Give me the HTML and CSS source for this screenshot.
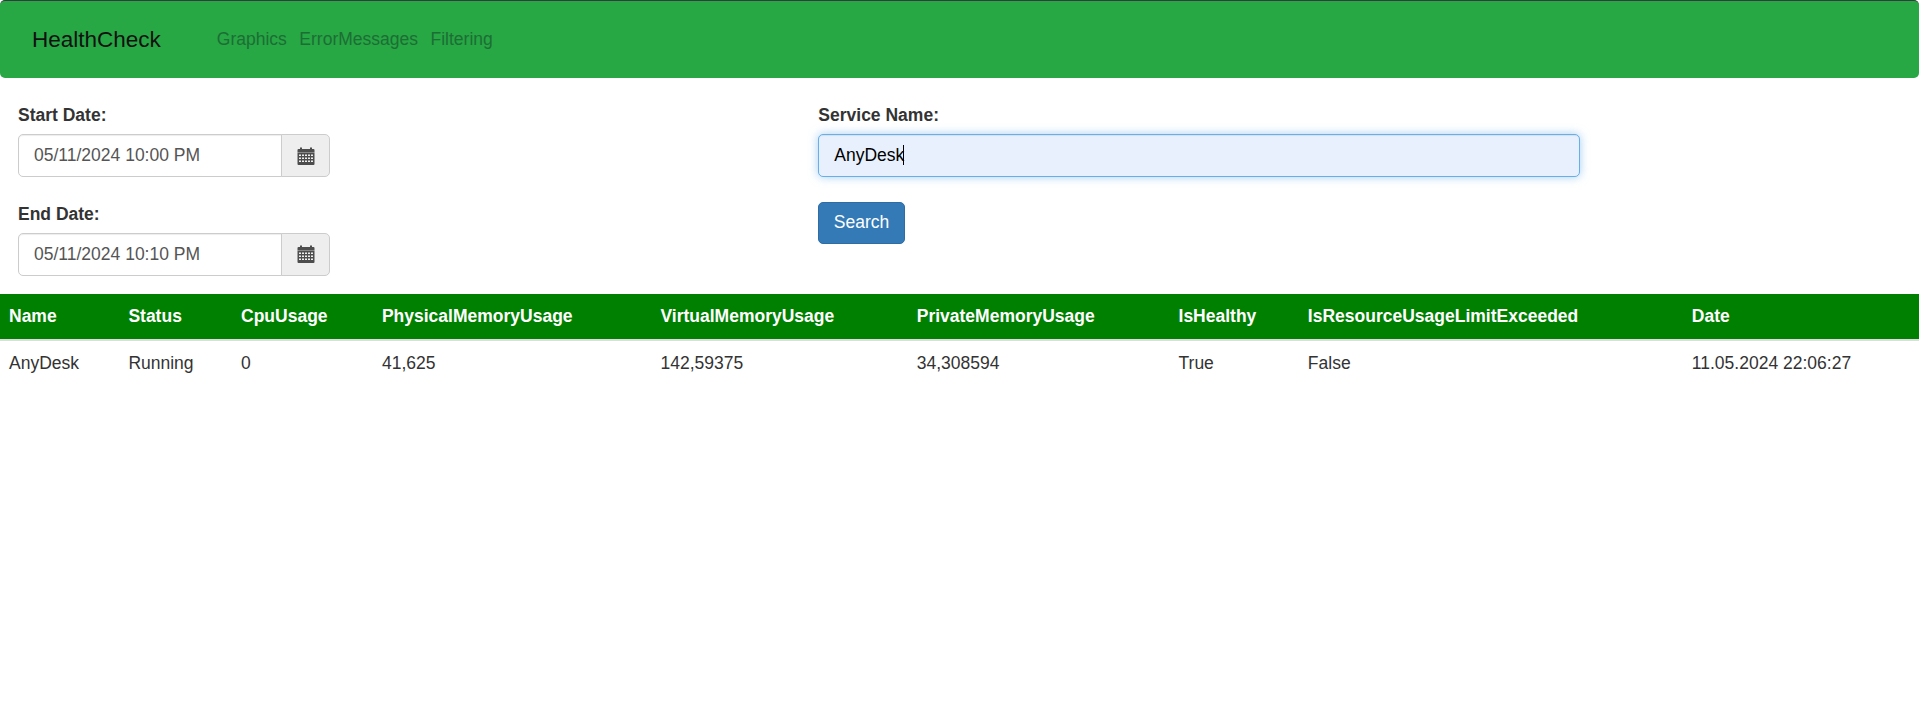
FILE: index.html
```html
<!DOCTYPE html>
<html lang="en">

<head>
    <meta charset="UTF-8" />
    <meta name="viewport" content="width=device-width, initial-scale=1.0" />
    <title>HealthCheck</title>

    <link rel="stylesheet" href="styles.css">
</head>

<body>
    <svg class="icon-defs" width="0" height="0" aria-hidden="true">
        <symbol id="calendar" viewBox="0 0 18 18">
            <path d="M3 0.5h2v1.5h8V0.5h2v1.5h1.5a1 1 0 0 1 1 1V5.5H0.5V3a1 1 0 0 1 1-1H3z" />
            <path fill-rule="evenodd" d="M0.5 5.8h17v11.2a1 1 0 0 1-1 1H1.5a1 1 0 0 1-1-1z
                M2 7.5v1.5h2V7.5z M5 7.5v1.5h2V7.5z M8 7.5v1.5h2V7.5z M11 7.5v1.5h2V7.5z M14 7.5v1.5h2V7.5z
                M2 10.5v1.5h2V10.5z M5 10.5v1.5h2V10.5z M8 10.5v1.5h2V10.5z M11 10.5v1.5h2V10.5z M14 10.5v1.5h2V10.5z
                M2 13.5v1.5h2V13.5z M5 13.5v1.5h2V13.5z M8 13.5v1.5h2V13.5z M11 13.5v1.5h2V13.5z M14 13.5v1.5h2V13.5z" />
        </symbol>
    </svg>

    <!-- NAVBAR -->
    <nav class="navbar">
        <a class="brand" href="#">HealthCheck</a>
        <ul class="nav-links">
            <li><a href="#">Graphics</a></li>
            <li><a href="#">ErrorMessages</a></li>
            <li><a href="#">Filtering</a></li>
        </ul>
    </nav>

    <!-- FILTER -->
    <form class="filter" action="">
        <div class="col">
            <div class="form-group">
                <label for="startDate">Start Date:</label>
                <div class="input-group">
                    <input class="form-control" type="text" id="startDate" value="05/11/2024 10:00 PM" />
                    <span class="addon"><svg class="icon"><use href="#calendar"></use></svg></span>
                </div>
            </div>

            <div class="form-group last">
                <label for="endDate">End Date:</label>
                <div class="input-group">
                    <input class="form-control" type="text" id="endDate" value="05/11/2024 10:10 PM" />
                    <span class="addon"><svg class="icon"><use href="#calendar"></use></svg></span>
                </div>
            </div>
        </div>

        <div class="col">
            <div class="form-group">
                <label for="serviceName">Service Name:</label>
                <div class="service-field">
                    <input class="form-control focused" type="text" id="serviceName" value="AnyDesk" />
                    <span class="caret"></span>
                </div>
            </div>

            <button class="btn-search" type="button">Search</button>
        </div>
    </form>

    <!-- RESULT -->
    <table class="result">
        <thead>
            <tr>
                <th>Name</th>
                <th>Status</th>
                <th>CpuUsage</th>
                <th>PhysicalMemoryUsage</th>
                <th>VirtualMemoryUsage</th>
                <th>PrivateMemoryUsage</th>
                <th>IsHealthy</th>
                <th>IsResourceUsageLimitExceeded</th>
                <th>Date</th>
            </tr>
        </thead>
        <tbody>
            <tr>
                <td>AnyDesk</td>
                <td>Running</td>
                <td>0</td>
                <td>41,625</td>
                <td>142,59375</td>
                <td>34,308594</td>
                <td>True</td>
                <td>False</td>
                <td>11.05.2024 22:06:27</td>
            </tr>
        </tbody>
    </table>
</body>

</html>
```

FILE: styles.css
```css
* {
    box-sizing: border-box;
}

body {
    margin: 0;
    font-family: "Liberation Sans", Arial, Helvetica, sans-serif;
    font-size: 17.5px;
    line-height: 25px;
    color: #333;
    background: #fff;
}

.icon-defs {
    display: block;
    height: 0;
}

.navbar {
    display: flex;
    align-items: center;
    height: 78px;
    padding: 0 32px;
    border-top: 1px solid #343a40;
    border-radius: 5px;
    background: #28a745;
    margin-bottom: 25px;
}

.brand {
    font-size: 22.5px;
    color: #111;
    text-decoration: none;
}

.nav-links {
    display: flex;
    gap: 12.5px;
    margin: 0 0 0 56px;
    padding: 0;
    list-style: none;
}

.nav-links a {
    color: #1c6e34;
    text-decoration: none;
}

.filter {
    display: flex;
    margin-bottom: 18.75px;
}

.col {
    width: 41.6667%;
    padding: 0 18.75px;
}

.col:first-child {
    padding-left: 18px;
}

.form-group {
    margin-bottom: 25px;
}

.form-group.last {
    margin-bottom: 0;
}

label {
    display: block;
    margin-bottom: 6.25px;
    font-weight: bold;
}

.input-group {
    display: flex;
    width: 312px;
}

.form-control {
    display: block;
    width: 100%;
    height: 42.5px;
    padding: 7.5px 15px;
    border: 1px solid #ccc;
    border-radius: 5px;
    font: inherit;
    color: #555;
    box-shadow: inset 0 1px 1px rgba(0, 0, 0, .075);
}

.input-group .form-control {
    flex: 1;
    min-width: 0;
    border-radius: 5px 0 0 5px;
}

.form-control.focused {
    border-color: #66afe9;
    outline: 0;
    background: #e8f0fe;
    color: #000;
    box-shadow: inset 0 1px 1px rgba(0, 0, 0, .075), 0 0 10px rgba(102, 175, 233, .6);
}

.addon {
    display: flex;
    align-items: center;
    justify-content: center;
    width: 49px;
    border: 1px solid #ccc;
    border-radius: 0 5px 5px 0;
    margin-left: -1px;
    background: #eee;
}

.icon {
    width: 18px;
    height: 18px;
    fill: #4d4d4d;
}

.service-field {
    position: relative;
}

.caret {
    position: absolute;
    left: 85px;
    top: 11px;
    width: 1px;
    height: 20px;
    background: #000;
}

.btn-search {
    display: block;
    height: 42.5px;
    padding: 0 14.5px 2px;
    border: 1px solid #2e6da4;
    border-radius: 5px;
    background: #337ab7;
    color: #fff;
    font: inherit;
}

.result {
    width: 100%;
    border-collapse: collapse;
}

.result th {
    padding: 10px;
    background: #008000;
    color: #fff;
    text-align: left;
    border-bottom: 2.5px solid #ddd;
}

.result td {
    padding: 10px;
}

.result th:first-child,
.result td:first-child {
    padding-left: 9px;
    padding-right: 10.5px;
}
```
